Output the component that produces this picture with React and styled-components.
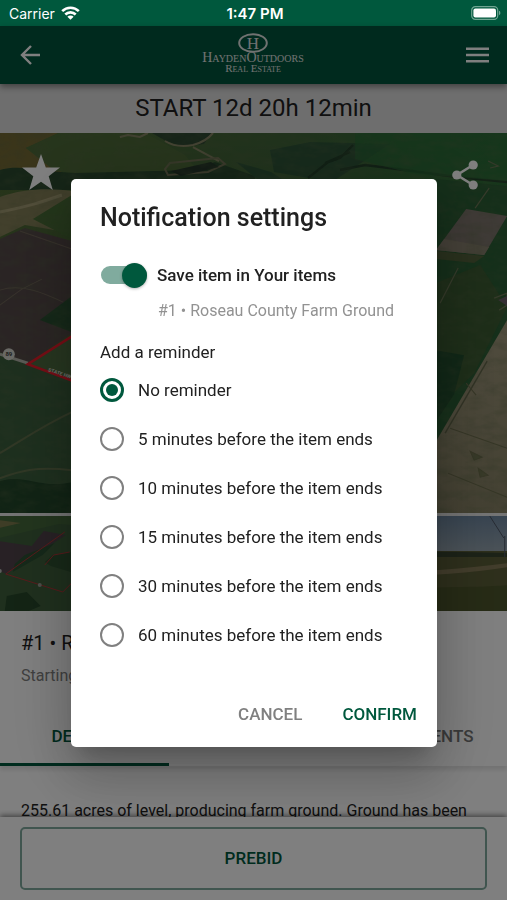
import { useState } from "react";
import styled, { createGlobalStyle } from "styled-components";

const reminders = [
  { value: "0", label: "No reminder" },
  { value: "5", label: "5 minutes before the item ends" },
  { value: "10", label: "10 minutes before the item ends" },
  { value: "15", label: "15 minutes before the item ends" },
  { value: "30", label: "30 minutes before the item ends" },
  { value: "60", label: "60 minutes before the item ends" },
];

export default function App() {
  return (
    <Screen>
      <GlobalStyle />
      <StatusBar />
      <Header />
      <Content>
        <Countdown>START 12d 20h 12min</Countdown>
        <Gallery />
        <ItemTitle>#1 • Roseau County Farm Ground</ItemTitle>
        <ItemPrice>Starting bid</ItemPrice>
        <Tabs>
          <Tab type="button" $active>DETAILS</Tab>
          <Tab type="button">TERMS</Tab>
          <Tab type="button">DOCUMENTS</Tab>
        </Tabs>
        <Description>
          255.61 acres of level, producing farm ground. Ground has been
        </Description>
      </Content>
      <Footer>
        <BidButton type="button">PREBID</BidButton>
      </Footer>
      <NotificationDialog />
    </Screen>
  );
}

function StatusBar() {
  return (
    <Status>
      <Carrier>
        Carrier
        <svg width="19" height="14" viewBox="0 0 19 14" fill="none" stroke="#fff" strokeWidth="2.6">
          <path d="M1.2 5.2a11.8 11.8 0 0 1 16.6 0" />
          <path d="M4.3 8.5a7.4 7.4 0 0 1 10.4 0" />
          <path d="M9.5 13.8 6.4 10.7a4.4 4.4 0 0 1 6.2 0z" fill="#fff" stroke="none" />
        </svg>
      </Carrier>
      <Clock>1:47 PM</Clock>
      <svg width="30" height="14" viewBox="0 0 30 14">
        <rect x="0.7" y="0.7" width="26" height="12.6" rx="3.6" fill="none" stroke="#6fa592" strokeWidth="1.2" />
        <rect x="2.4" y="2.4" width="22.6" height="9.2" rx="2" fill="#fff" />
        <path d="M28 4.8c1.8.6 1.8 3.8 0 4.4z" fill="#6fa592" />
      </svg>
    </Status>
  );
}

function Header() {
  return (
    <TopBar>
      <IconButton type="button" aria-label="Back">
        <svg width="20" height="20" viewBox="0 0 20 20" fill="none" stroke="currentColor" strokeWidth="2.4">
          <path d="M20 10H2.4M11 1l-9 9 9 9" />
        </svg>
      </IconButton>
      <Logo href="#">
        <svg width="30" height="20" viewBox="0 0 30 20">
          <ellipse cx="15" cy="10" rx="13.8" ry="8.8" fill="none" stroke="currentColor" strokeWidth="2" />
          <text x="15" y="15.6" textAnchor="middle" fontFamily="Liberation Serif, serif" fontSize="17" fill="currentColor">
            H
          </text>
        </svg>
        <LogoName>HaydenOutdoors</LogoName>
        <LogoTag>Real Estate</LogoTag>
      </Logo>
      <IconButton type="button" aria-label="Menu">
        <svg width="24" height="16" viewBox="0 0 24 16" fill="currentColor">
          <path d="M0 .4h23V3H0zM0 6.7h23v2.6H0zM0 13h23v2.6H0z" />
        </svg>
      </IconButton>
    </TopBar>
  );
}

function Gallery() {
  return (
    <div>
      <Hero>
        <AerialPhoto />
        <HeroActions>
          <IconButton type="button" aria-label="Add to favourites">
            <svg width="38" height="36" viewBox="0 0 38 36" fill="currentColor">
              <path d="m19 0 4.8 13.4L38 13.6 26.7 22.3 30.8 36 19 27.8 7.2 36l4.1-13.7L0 13.6l14.2-.2z" />
            </svg>
          </IconButton>
          <IconButton type="button" aria-label="Share">
            <svg width="26" height="30" viewBox="0 0 26 30" fill="currentColor">
              <path d="M21 5 5 15l16 10" fill="none" stroke="currentColor" strokeWidth="2.6" />
              <circle cx="21.2" cy="5" r="4.6" />
              <circle cx="4.8" cy="15" r="4.6" />
              <circle cx="21.2" cy="25" r="4.6" />
            </svg>
          </IconButton>
        </HeroActions>
      </Hero>
      <Thumbs>
        <ParcelThumb />
        <FieldThumb />
        <FieldThumb />
        <FieldThumb />
      </Thumbs>
    </div>
  );
}

function AerialPhoto() {
  return (
    <Photo viewBox="0 0 507 380" preserveAspectRatio="xMidYMid slice">
      <defs>
        <filter id="grain" x="0" y="0" width="100%" height="100%">
          <feTurbulence type="fractalNoise" baseFrequency="0.06 0.12" numOctaves="4" seed="6" />
          <feColorMatrix values="0 0 0 0 0.1  0 0 0 0 0.14  0 0 0 0 0.06  1.8 0 0 0 -0.7" />
        </filter>
        <filter id="soft"><feGaussianBlur stdDeviation="0.6" /></filter>
        <linearGradient id="land" x1="0" x2="1" y1="0" y2="0.2">
          <stop offset="0" stopColor="#4d6833" />
          <stop offset="0.55" stopColor="#41653a" />
          <stop offset="1" stopColor="#2d6e37" />
        </linearGradient>
        <linearGradient id="tan" x1="0" x2="0" y1="0" y2="1">
          <stop offset="0" stopColor="#a0987c" />
          <stop offset="1" stopColor="#888265" />
        </linearGradient>
      </defs>
      <rect width="507" height="380" fill="url(#land)" />
      <g filter="url(#soft)">
        <path d="M0 0h58l-32 15 34 22 10 13H0z" fill="#756b36" />
        <path d="M26 15 60 0h85l40 22 12 15-80 6-62-5z" fill="#4d6b38" />
        <path d="M0 37c20-6 45 2 75 3l120-3 20-8 40 14v14H0z" fill="#294a2e" />
        <path d="M0 64c25-9 50-9 72-6v42L25 92 0 104z" fill="#858059" />
        <path d="M33 86 72 62v44z" fill="#476c34" />
        <path d="M0 79c30-6 42-10 62-17" stroke="#a59d75" strokeWidth="3" fill="none" />
        <path d="m0 106 25-11 47 13v92l-44 30L0 219z" fill="#544a48" />
        <path d="m0 172 22-16 20-10M0 157c25-8 50 6 72 16M20 98l52 18" stroke="#706459" strokeWidth="1" fill="none" />
        <path d="m40 187 32-24v36z" fill="#2c5133" />
        <path d="M0 219 28 230l44 18v132H0z" fill="#3b5f3e" />
        <path d="M28 230 72 204v42z" fill="#4e6d40" />
        <path d="M0 320c24-14 42-27 72-41M0 345c20-7 35-12 72-8" stroke="#626f4c" strokeWidth="2" fill="none" />
        <path d="M0 348c24-8 40 8 72 1v31H0z" fill="#24462a" />
        <path d="m152 0 14 8 18 6 20-3 8-11z" fill="#2f4833" />
        <path d="M120 4l8-2 12 2 8-4M165 8c8 5 18 6 28 4 8-2 16-7 20-12M193 14l26 14" stroke="#898666" strokeWidth="2" fill="none" />
        <path d="M165 36l5-6 48-5 7 6-17 8-40 3z" fill="none" stroke="#727154" strokeWidth="2" />
        <path d="M171 38l40-9 8 5-38 9z" fill="#27382a" />
        <path d="M236 29l35 10 14 9-28-2zM270 17l40-8 80 2-58 38-58-10z" fill="#2f5538" />
        <path d="m308 45 20-16 12-4 13-13M325 30l25-11M340 37l25-5 32 4 60 8 50 5" stroke="#233f2a" strokeWidth="2.4" fill="none" />
        <path d="M355 0h152v48l-92-7-60-15z" fill="#2b6c37" opacity="0.7" />
        <path d="m436 46 71 7v145l-71 110z" fill="#2c5e34" />
        <path d="m436 150 44-18 27 42-33 66-38 36z" fill="#3a5c31" />
        <path d="m436 217 28 5-10 39-18 27z" fill="#244f2e" />
        <path d="m466 76 41 7-23 39-48-5z" fill="#7e746d" />
        <path d="m444 106 45 8-5 8-48-5z" fill="#8a816f" />
        <path d="M436 118l48 5-10 7-38-4z" fill="#52623a" />
        <path d="m440 170 18-35M475 75l14-20M488 28l10 5-8 2M494 165l13-5v12l-8 5" stroke="#6d7657" strokeWidth="1.2" fill="none" />
        <path d="m498 167 9-4v10z" fill="#6b5f68" />
        <path d="M507 187 436 308v72h71z" fill="url(#tan)" />
        <path d="m445 300 42-72" stroke="#64664b" strokeWidth="1.4" fill="none" />
        <path d="m450 295 57 20M448 340l59 24M470 318l12 6-8 3zM478 335l10 7-8 2zM466 250l10 12" stroke="#6d6d4e" strokeWidth="1" fill="#727452" />
      </g>
      <rect width="507" height="380" filter="url(#grain)" opacity="0.35" />
      <path d="M0 221l28 9" stroke="#b5b4aa" strokeWidth="3" />
      <path d="m74 202-46 29 46 17" fill="none" stroke="#ea1c2b" strokeWidth="2.6" />
      <text x="48" y="238" transform="rotate(18 48 238)" fontFamily="Roboto, sans-serif" fontSize="5" fontWeight="700" fill="#d7dbd2">
        STATE HWY
      </text>
      <circle cx="9" cy="221" r="6" fill="#d2d2ca" />
      <text x="9" y="223" textAnchor="middle" fontFamily="Roboto, sans-serif" fontSize="6" fontWeight="700" fill="#3c3c3a">
        89
      </text>
    </Photo>
  );
}

function ParcelThumb() {
  return (
    <Photo viewBox="0 0 127 95" preserveAspectRatio="xMidYMid slice">
      <rect width="127" height="95" fill="#3f603c" />
      <path d="M0 0h127v12L60 8 0 22z" fill="#466a3c" />
      <path d="M0 4l22 3L0 12z" fill="#7d7a4c" />
      <path d="m0 25 33 5 12-15 22 4-59 39-8-3z" fill="#50434a" />
      <path d="m16 48 10-9 30-12-12 12-30 17z" fill="#2c5133" />
      <path d="m8 80 20-4 14 14-12 5H6z" fill="#27482a" />
      <path d="m46 46 8-7 18-3v20l-20-6z" fill="#2f5231" />
      <path d="m66 16-59 42 57 18 10-10M46 49l9-10 16-3" fill="none" stroke="#b03436" />
      <circle cx="1" cy="55" r="2" fill="#bbb" />
      <circle cx="41" cy="69" r="2" fill="#9a9a92" />
    </Photo>
  );
}

function FieldThumb() {
  return (
    <Photo viewBox="0 0 127 95" preserveAspectRatio="xMidYMid slice">
      <linearGradient id="sky" x1="0" x2="0" y1="0" y2="1">
        <stop offset="0" stopColor="#7089a2" />
        <stop offset="1" stopColor="#98a6b0" />
      </linearGradient>
      <rect width="127" height="37" fill="url(#sky)" />
      <path d="M0 35h127v60H0z" fill="#5c5f38" />
      <path d="M0 35l80 1 47 1v4H0z" fill="#38452f" />
      <path d="M0 56c40 0 80-3 127-9v4C90 57 50 60 0 60z" fill="#857a57" />
      <path d="M0 74c40-4 90-2 127-5v26H0z" fill="#4d562c" />
      <path d="M123 20v21M108 0l14 22" stroke="#4d5666" strokeWidth="1" />
    </Photo>
  );
}

function NotificationDialog() {
  const [saved, setSaved] = useState(true);
  const [reminder, setReminder] = useState("0");

  return (
    <Backdrop>
      <Dialog role="dialog" aria-modal="true" aria-labelledby="dialog-title">
        <DialogTitle id="dialog-title">Notification settings</DialogTitle>
        <SwitchRow>
          <Switch
            type="checkbox"
            role="switch"
            checked={saved}
            onChange={(e) => setSaved(e.target.checked)}
          />
          Save item in Your items
        </SwitchRow>
        <ItemName>#1 • Roseau County Farm Ground</ItemName>
        <Reminders>
          <Legend>Add a reminder</Legend>
          {reminders.map(({ value, label }) => (
            <RadioRow key={value}>
              <Radio
                type="radio"
                name="reminder"
                value={value}
                checked={reminder === value}
                onChange={() => setReminder(value)}
              />
              {label}
            </RadioRow>
          ))}
        </Reminders>
        <DialogActions>
          <TextButton type="button">CANCEL</TextButton>
          <TextButton type="button" $primary>CONFIRM</TextButton>
        </DialogActions>
      </Dialog>
    </Backdrop>
  );
}

const GlobalStyle = createGlobalStyle`
  * {
    box-sizing: border-box;
  }
  body {
    margin: 0;
    background: #fff;
    color: #212121;
    font-family: Roboto, "Liberation Sans", sans-serif;
  }
`;

const Screen = styled.div`
  display: flex;
  flex-direction: column;
  height: 100vh;
  overflow: hidden;
`;

const Status = styled.div`
  display: grid;
  grid-template-columns: 1fr auto 1fr;
  align-items: center;
  flex-shrink: 0;
  height: 26px;
  padding: 0 6px 0 9px;
  background: #00583d;
  color: #fff;
  font-family: Inter, sans-serif;
  font-size: 14px;
  > svg {
    justify-self: end;
  }
`;

const Carrier = styled.span`
  display: flex;
  align-items: center;
  gap: 6px;
`;

const Clock = styled.span`
  font-size: 15px;
  font-weight: 600;
`;

const TopBar = styled.header`
  display: flex;
  align-items: center;
  justify-content: space-between;
  flex-shrink: 0;
  z-index: 1;
  height: 58px;
  padding: 0 17px 0 20px;
  background: #00543d;
  color: #fff;
  box-shadow: 0 3px 6px rgba(0, 0, 0, 0.4);
`;

const BaseButton = styled.button`
  border: 0;
  padding: 0;
  background: none;
  font-family: inherit;
  cursor: pointer;
`;

const IconButton = styled(BaseButton)`
  display: flex;
  color: inherit;
`;

const Logo = styled.a`
  display: flex;
  flex-direction: column;
  align-items: center;
  padding-bottom: 4px;
  color: #e0e4e2;
  font-family: "Liberation Serif", serif;
  font-variant: small-caps;
  text-decoration: none;
`;

const LogoName = styled.span`
  font-size: 14px;
  line-height: 10px;
`;

const LogoTag = styled.span`
  font-size: 11px;
  line-height: 10px;
`;

const Content = styled.main`
  flex: 1;
  min-height: 0;
  overflow: hidden;
`;

const Countdown = styled.div`
  padding: 8px 0 9px;
  background: #dcdcdc;
  font-size: 24px;
  line-height: 32px;
  text-align: center;
`;

const Hero = styled.div`
  position: relative;
  aspect-ratio: 4 / 3;
`;

const Photo = styled.svg`
  display: block;
  width: 100%;
  height: 100%;
`;

const HeroActions = styled.div`
  position: absolute;
  inset: 21px 29px auto 22px;
  display: flex;
  align-items: flex-end;
  justify-content: space-between;
  color: #fff;
`;

const Thumbs = styled.div`
  display: grid;
  grid-template-columns: repeat(4, 1fr);
  gap: 3px;
  padding-top: 3px;
  height: 98px;
  background: #e8e8e8;
`;

const ItemTitle = styled.h1`
  margin: 0;
  padding: 20px 21px 0;
  font-size: 20px;
  font-weight: 400;
  line-height: 24px;
`;

const ItemPrice = styled.p`
  margin: 0;
  padding: 11px 21px 0;
  color: #808080;
  font-size: 16px;
  line-height: 20px;
`;

const Tabs = styled.nav`
  display: grid;
  grid-template-columns: repeat(3, 1fr);
  height: 63px;
  margin-top: 17px;
  box-shadow: 0 4px 4px rgba(0, 0, 0, 0.1);
`;

const Tab = styled(BaseButton)`
  padding-top: 5px;
  border-bottom: 3px solid ${({ $active }) => ($active ? "#00583d" : "transparent")};
  color: ${({ $active }) => ($active ? "#00583d" : "#757575")};
  font-size: 17px;
  font-weight: 500;
`;

const Description = styled.p`
  margin: 0;
  padding: 33px 21px 0;
  font-size: 16px;
  line-height: 24px;
`;

const Footer = styled.footer`
  flex-shrink: 0;
  z-index: 1;
  padding: 10px 20px;
  background: #fff;
  box-shadow: 0 -2px 5px rgba(0, 0, 0, 0.45);
`;

const BidButton = styled(BaseButton)`
  display: block;
  width: 100%;
  height: 63px;
  padding-bottom: 2px;
  border: 2px solid #80ab9e;
  border-radius: 5px;
  color: #00583d;
  font-size: 17px;
  font-weight: 500;
`;

const Backdrop = styled.div`
  position: fixed;
  inset: 26px 0 0;
  z-index: 2;
  display: flex;
  align-items: center;
  padding: 0 70px 0 71px;
  background: rgba(0, 0, 0, 0.5);
`;

const Dialog = styled.section`
  flex: 1;
  padding: 24px 10px 9px 29px;
  border-radius: 5px;
  background: #fff;
  box-shadow: 0 15px 20px -9px rgba(0, 0, 0, 0.2),
    0 32px 51px 4px rgba(0, 0, 0, 0.14), 0 12px 62px 11px rgba(0, 0, 0, 0.12);
`;

const DialogTitle = styled.h2`
  margin: 0;
  font-size: 25px;
  font-weight: 500;
  line-height: 30px;
`;

const SwitchRow = styled.label`
  display: flex;
  align-items: center;
  gap: 10px;
  height: 32px;
  margin-top: 26px;
  padding-left: 1px;
  font-size: 17px;
  font-weight: 500;
`;

const Switch = styled.input`
  appearance: none;
  display: flex;
  align-items: center;
  width: 46px;
  height: 18px;
  margin: 0;
  border-radius: 9px;
  background: ${({ checked }) => (checked ? "#80ab9e" : "#9e9e9e")};
  &::before {
    content: "";
    width: 25px;
    height: 25px;
    margin-left: ${({ checked }) => (checked ? "auto" : "0")};
    border-radius: 50%;
    background: ${({ checked }) => (checked ? "#00583d" : "#fafafa")};
    box-shadow: 0 1px 3px rgba(0, 0, 0, 0.3);
  }
`;

const ItemName = styled.p`
  margin: 10px 0 0;
  padding-left: 58px;
  color: #929292;
  font-size: 16px;
  line-height: 20px;
`;

const Reminders = styled.fieldset`
  margin: 21px 0 0;
  padding: 0;
  border: 0;
`;

const Legend = styled.legend`
  padding: 0 0 3px;
  font-size: 17px;
  line-height: 20px;
`;

const RadioRow = styled.label`
  display: flex;
  align-items: center;
  gap: 14px;
  height: 49px;
  font-size: 17px;
`;

const Radio = styled.input`
  appearance: none;
  width: 24px;
  height: 24px;
  margin: 0;
  padding: 3px;
  border: 2px solid #808080;
  border-radius: 50%;
  &:checked {
    border: 3px solid #00583d;
    background: #00583d content-box;
  }
`;

const DialogActions = styled.div`
  display: flex;
  justify-content: flex-end;
  gap: 20px;
  margin-top: 31px;
`;

const TextButton = styled(BaseButton)`
  height: 48px;
  padding: 0 10px;
  color: ${({ $primary }) => ($primary ? "#00583d" : "#808080")};
  font-size: 17px;
  font-weight: 500;
`;
